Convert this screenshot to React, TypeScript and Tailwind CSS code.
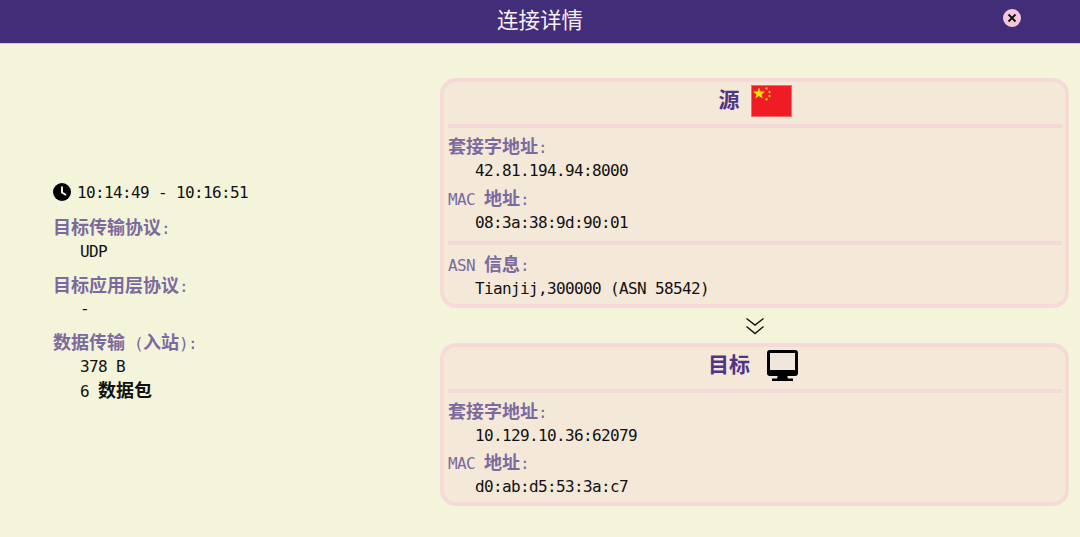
import { ReactNode } from 'react';

// latin runs are squeezed to a 9px advance, CJK runs sit on an 18px grid
const Mixed = ({ text }: { text: string }) => (
  <>
    {text.split(/([\u4e00-\u9fff]+)/).map((part, i) =>
      /[\u4e00-\u9fff]/.test(part) ? (
        <span key={i} className="text-[18px] font-bold tracking-normal">
          {part}
        </span>
      ) : (
        <span key={i}>{part}</span>
      )
    )}
  </>
);

const Label = ({ text, className = '' }: { text: string; className?: string }) => (
  <div className={`text-[#7b6a9e] ${className}`}>
    <Mixed text={text} />
  </div>
);

const Value = ({ text, className = '' }: { text: string; className?: string }) => (
  <div className={`pl-[27px] text-[#111111] ${className}`}>
    <Mixed text={text} />
  </div>
);

const Divider = ({ className = '' }: { className?: string }) => (
  <div className={`h-[4px] bg-[#f5d9d8] ${className}`} />
);

const Field = ({ label, value }: { label: string; value: string }) => (
  <div>
    <Label text={label} className="h-[23px] leading-[23px]" />
    <Value text={value} className="h-[24px] leading-[26px]" />
  </div>
);

const Card = ({
  title,
  icon,
  headClass,
  children,
}: {
  title: string;
  icon: ReactNode;
  headClass: string;
  children: ReactNode;
}) => (
  <div className="rounded-[16px] border-4 border-[#f5dad8] bg-[#f4e8d9] pb-[4px] pl-[4px] pr-[3px]">
    <div className={`flex h-[42px] items-center justify-center pb-[5px] ${headClass}`}>
      <span className="text-[21px] font-bold tracking-normal text-[#4f3487]">{title}</span>
      {icon}
    </div>
    <Divider />
    {children}
  </div>
);

const ClockIcon = () => (
  <svg width="18" height="18" viewBox="0 0 18 18" className="shrink-0">
    <circle cx="9" cy="9" r="9" fill="#000" />
    <path d="M9 3.5V9.5L13 12" fill="none" stroke="#f4f4da" strokeWidth="2" />
  </svg>
);

const CnFlag = () => (
  <svg width="41" height="32" viewBox="0 0 41 32" className="shrink-0">
    <rect x="0.5" y="0.5" width="40" height="31" fill="#f01c25" stroke="#f56a66" />
    <polygon
      points="8,2.5 9.6,6.6 14,6.6 10.5,9.4 11.8,13.5 8,11.1 4.2,13.5 5.5,9.4 2,6.6 6.4,6.6"
      fill="#ffe600"
    />
    <circle cx="15.5" cy="3.4" r="1.2" fill="#f9b70f" />
    <circle cx="18.5" cy="7" r="1.2" fill="#f9b70f" />
    <circle cx="18.5" cy="11" r="1.2" fill="#f9b70f" />
    <circle cx="15.5" cy="14.3" r="1.2" fill="#f9b70f" />
  </svg>
);

const MonitorIcon = () => (
  <svg width="31" height="31" viewBox="0 0 31 31" className="shrink-0">
    <rect x="1.5" y="1.5" width="28" height="23" rx="1.5" fill="#f1e6dc" stroke="#000" strokeWidth="3" />
    <rect x="2" y="20" width="27" height="5.5" fill="#000" />
    <path d="M11 25H20L21 28.5H26V31H5V28.5H10Z" fill="#000" />
  </svg>
);

export default function App() {
  return (
    <div className="flex h-[537px] w-[1080px] flex-col bg-[#f4f4da] font-['DejaVu_Sans_Mono','Noto_Sans_CJK_SC',monospace] text-[16px] tracking-[-0.63px]">
      <header className="relative flex h-[44px] shrink-0 items-center justify-center border-b border-b-[#d6c9dc] bg-[#422d79] pb-[4px]">
        <span className="font-['Noto_Sans_CJK_SC',sans-serif] text-[21.5px] tracking-normal text-[#f6f0f2]">连接详情</span>
        <button className="absolute left-[1003px] top-[9px] flex h-[18px] w-[18px] items-center justify-center rounded-full bg-[#f3c6dc]">
          <svg width="10" height="10" viewBox="0 0 10 10">
            <path d="M1.5 1.5L8.5 8.5M8.5 1.5L1.5 8.5" stroke="#111" strokeWidth="1.8" />
          </svg>
        </button>
      </header>

      <main className="flex min-h-0 flex-1">
        <section className="flex w-[440px] shrink-0 flex-col justify-center pl-[53px]">
          <div className="mb-[11px] flex h-[24px] items-center gap-[6px] text-[#111111]">
            <ClockIcon />
            <span className="pt-[2px]">10:14:49 - 10:16:51</span>
          </div>
          <div className="mb-[10px]">
            <Label text="目标传输协议:" className="h-[24px] leading-[26px]" />
            <Value text="UDP" className="h-[24px] leading-[26px]" />
          </div>
          <div className="mb-[10px]">
            <Label text="目标应用层协议:" className="h-[24px] leading-[26px]" />
            <Value text="-" className="h-[24px] leading-[24px]" />
          </div>
          <div>
            <Label text="数据传输 (入站):" className="h-[24px] leading-[24px]" />
            <Value text="378 B" className="h-[23px] leading-[23px]" />
            <Value text="6 数据包" className="h-[23px] leading-[25px]" />
          </div>
        </section>

        <section className="flex w-[629px] shrink-0 flex-col pt-[34px]">
          <Card title="源" icon={<CnFlag />} headClass="gap-[11px]">
            <div className="flex flex-col gap-[4.5px] pt-[7px]">
              <Field label="套接字地址:" value="42.81.194.94:8000" />
              <Field label="MAC 地址:" value="08:3a:38:9d:90:01" />
            </div>
            <Divider className="mt-[7.5px]" />
            <div className="pb-[0.5px] pt-[7.5px]">
              <Field label="ASN 信息:" value="Tianjij,300000 (ASN 58542)" />
            </div>
          </Card>

          <div className="flex h-[35px] items-center justify-center">
            <svg width="20" height="18" viewBox="0 0 20 18">
              <path d="M1.5 1.5L10 8L18.5 1.5M1.5 9.5L10 16.5L18.5 9.5" fill="none" stroke="#111" strokeWidth="1.4" />
            </svg>
          </div>

          <Card title="目标" icon={<MonitorIcon />} headClass="gap-[17px] pr-[4px]">
            <div className="flex flex-col gap-[4.5px] pt-[6.5px]">
              <Field label="套接字地址:" value="10.129.10.36:62079" />
              <Field label="MAC 地址:" value="d0:ab:d5:53:3a:c7" />
            </div>
          </Card>
        </section>
      </main>
    </div>
  );
}
